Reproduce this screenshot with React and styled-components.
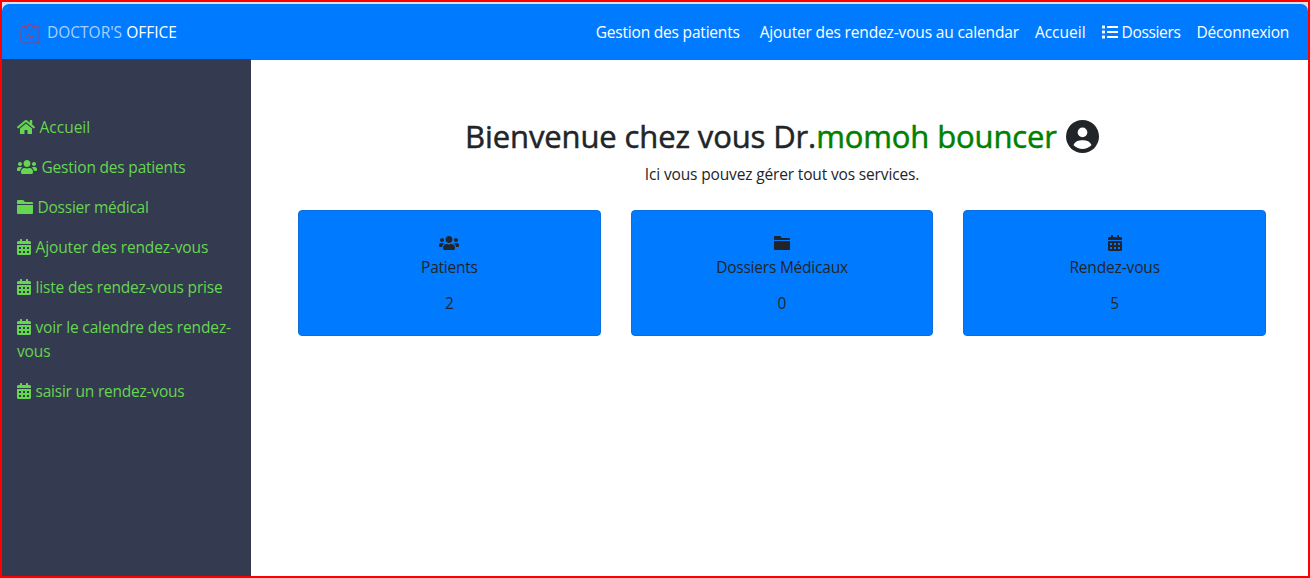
import React from "react";
import styled, { createGlobalStyle } from "styled-components";
import { FaHome, FaUsers, FaCalendarAlt, FaList } from "react-icons/fa";

const GlobalStyle = createGlobalStyle`
  * { box-sizing: border-box; }
  body {
    margin: 0;
    background: #fff;
    color: #212529;
    font: 400 15.5px/24px "Open Sans", "Noto Sans", sans-serif;
  }
`;

const Page = styled.div`
  display: flex;
  flex-direction: column;
  height: 578px;
  border: 2px solid #f00;
  background: linear-gradient(#dee2e6 0 12px, #fff 12px);
  padding-top: 2px;
`;

const Navbar = styled.header`
  display: flex;
  align-items: center;
  justify-content: space-between;
  flex: none;
  height: 56px;
  padding: 0 19px 0 17px;
  background: #007bff;
  border-radius: 7px 7px 0 0;
  color: #fff;
`;

const Brand = styled.a`
  display: flex;
  align-items: center;
  color: #fff;
`;

const BrandIcon = styled.svg`
  width: 20px;
  height: 20px;
  margin: 3px 7px 0 1px;
  fill: none;
  stroke: #d92b4b;
  stroke-width: 0.9;
  opacity: 0.85;
`;

const Muted = styled.span`
  color: #a9d0fb;
`;

const Nav = styled.nav`
  display: flex;
  gap: 16px;
`;

const NavLink = styled.a`
  display: flex;
  align-items: center;
  gap: 4px;
  color: #fff;
  margin-right: ${(p) => p.$after || 0}px;
`;

const Label = styled.span`
  letter-spacing: ${(p) => p.$track || 0}px;
  white-space: ${(p) => (p.$wrap ? "normal" : "nowrap")};
`;

const Body = styled.div`
  display: flex;
  flex: 1;
  min-height: 0;
`;

const Sidebar = styled.aside`
  display: flex;
  flex-direction: column;
  gap: 16px;
  width: 249px;
  margin-top: -1px;
  padding: 56px 15px 0;
  background: #343a4f;
  color: #66d550;
`;

const SideLink = styled.a`
  display: block;
`;

const Glyph = styled.span`
  display: inline-block;
  line-height: 0;
  svg {
    display: block;
    width: ${(p) => p.$w}px;
    height: 16px;
  }
  ${SideLink} & {
    margin-right: 4.5px;
    vertical-align: -2px;
  }
`;

const Main = styled.main`
  flex: 1;
  padding: 57px 42px 0 47px;
  text-align: center;
`;

const Title = styled.h2`
  display: flex;
  align-items: center;
  justify-content: center;
  gap: 9px;
  margin: 0 0 7px;
  font-size: 31px;
  font-weight: 500;
  line-height: 38px;
  -webkit-text-stroke: 0.5px currentColor;
`;

const DoctorName = styled.span`
  color: green;
`;

const Intro = styled.p`
  margin: 0 0 24px;
`;

const Cards = styled.section`
  display: grid;
  grid-template-columns: repeat(3, 1fr);
  gap: 30px;
`;

const Card = styled.article`
  display: flex;
  flex-direction: column;
  align-items: center;
  height: 126px;
  padding: 24px 20px 0;
  background: #007bff;
  border: 1px solid #0a6fdc;
  border-radius: 4px;
`;

const CardLabel = styled.p`
  margin: 4px 0 12px;
`;

const Count = styled.p`
  margin: 0;
`;

const FolderIcon = () => (
  <svg viewBox="0 0 16 16" fill="currentColor">
    <path d="M1 1h5.2L8 3h7a1 1 0 0 1 1 1v1H0V2a1 1 0 0 1 1-1z" />
    <path d="M0 6h16v8a1 1 0 0 1-1 1H1a1 1 0 0 1-1-1z" />
  </svg>
);

const UserIcon = () => (
  <svg width="33" height="33" viewBox="0 0 32 32">
    <circle cx="16" cy="16" r="16" fill="#212529" />
    <circle cx="16" cy="12" r="4.7" fill="#fff" />
    <path d="M7.300 24.500c1-3.500 5-4.800 8.700-4.800s7.700 1.300 8.700 4.800c-5 4.700-12.400 4.700-17.400 0z" fill="#fff" />
  </svg>
);

const icons = {
  home: [FaHome, 18],
  users: [FaUsers, 20],
  folder: [FolderIcon, 16],
  calendar: [FaCalendarAlt, 14],
  list: [FaList, 16],
};

function Icon({ name }) {
  const [Drawing, width] = icons[name];
  return (
    <Glyph $w={width}>
      <Drawing />
    </Glyph>
  );
}

const sideLinks = [
  ["home", "Accueil", 0],
  ["users", "Gestion des patients", -0.2],
  ["folder", "Dossier médical", -0.24],
  ["calendar", "Ajouter des rendez-vous", -0.13],
  ["calendar", "liste des rendez-vous prise", -0.18],
  ["calendar", "voir le calendre des rendez-vous", -0.14],
  ["calendar", "saisir un rendez-vous", -0.22],
];

const cards = [
  ["users", "Patients", 2, -0.25],
  ["folder", "Dossiers Médicaux", 0, -0.22],
  ["calendar", "Rendez-vous", 5, -0.15],
];

export default function App() {
  return (
    <Page>
      <GlobalStyle />
      <Navbar>
        <Brand>
          <BrandIcon viewBox="0 0 21 21">
            <path d="M6 2.500H3a2 2 0 0 0-2 2V18a2 2 0 0 0 2 2h15a2 2 0 0 0 2-2V4.500a2 2 0 0 0-2-2h-3" />
            <path d="M6 2.500h2a2.500 2.500 0 0 1 5 0h2V4a2 2 0 0 1-2 2H8a2 2 0 0 1-2-2z" />
            <path d="M6.500 13H8l1.500-3 2.500 6 1.500-4h1" />
          </BrandIcon>
          <Label><Muted>DOCTOR'S</Muted> OFFICE</Label>
        </Brand>
        <Nav>
          <NavLink $after={4}><Label $track={-0.2}>Gestion des patients</Label></NavLink>
          <NavLink><Label $track={-0.15}>Ajouter des rendez-vous au calendar</Label></NavLink>
          <NavLink><Label>Accueil</Label></NavLink>
          <NavLink><Icon name="list" /><Label $track={-0.35}>Dossiers</Label></NavLink>
          <NavLink><Label $track={-0.25}>Déconnexion</Label></NavLink>
        </Nav>
      </Navbar>
      <Body>
        <Sidebar>
          {sideLinks.map(([icon, text, track]) => (
            <SideLink key={text}>
              <Icon name={icon} />
              <Label $track={track} $wrap>{text}</Label>
            </SideLink>
          ))}
        </Sidebar>
        <Main>
          <Title>
            <Label $track={-0.12}>Bienvenue chez vous Dr.<DoctorName>momoh bouncer</DoctorName></Label>
            <UserIcon />
          </Title>
          <Intro><Label $track={-0.15}>Ici vous pouvez gérer tout vos services.</Label></Intro>
          <Cards>
            {cards.map(([icon, text, count, track]) => (
              <Card key={text}>
                <Icon name={icon} />
                <CardLabel><Label $track={track}>{text}</Label></CardLabel>
                <Count>{count}</Count>
              </Card>
            ))}
          </Cards>
        </Main>
      </Body>
    </Page>
  );
}
